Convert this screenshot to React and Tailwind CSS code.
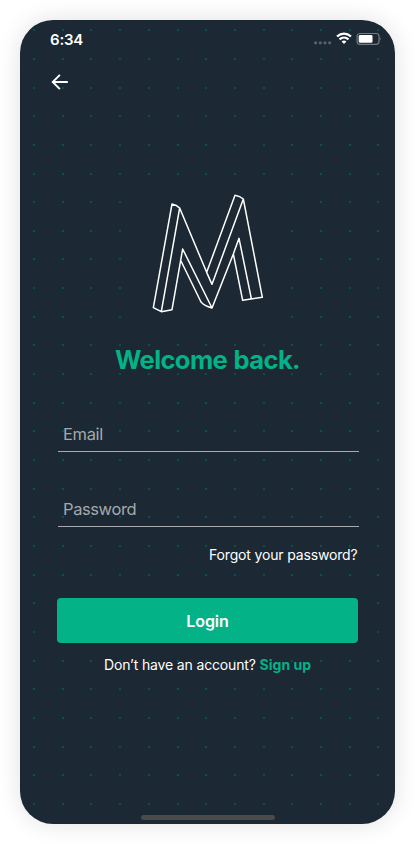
const columns = Array.from({ length: 13 }, (_, i) => Math.round(13 + i * 28.7));
const rows = Array.from({ length: 28 }, (_, i) => Math.round(9.2 + i * 28.66));

export default function App() {
  return (
    <main className="h-[844px] w-[415px] bg-white p-5 font-[Inter,sans-serif]">
      <section className="relative isolate flex h-[804px] w-[375px] flex-col overflow-clip rounded-[33px] bg-[#1c2833] text-white shadow-[0_0_24px_rgba(0,0,0,0.12)]">
        <svg className="absolute inset-0 -z-10" width="375" height="804" fill="#045347">
          {rows.map((y) => columns.map((x) => <rect key={`${x}-${y}`} x={x} y={y} width="2" height="2" />))}
        </svg>
        <header className="flex h-[38px] items-center justify-between pr-[14px] pl-[30px]">
          <span className="text-[15px] leading-none font-semibold tracking-[-0.2px]">6:34</span>
          <svg width="71" height="16" viewBox="0 0 71 16" fill="none">
            <g fill="#59626a">
              <circle cx="5.6" cy="11.8" r="1.6" /><circle cx="10.3" cy="11.8" r="1.6" /><circle cx="15" cy="11.8" r="1.6" /><circle cx="19.7" cy="11.8" r="1.6" />
            </g>
            <g stroke="#fff" strokeWidth="2.2">
              <path d="M27 5.5C31.2 1.6 36.8 1.6 41 5.5" /><path d="M29.5 8.4C32.2 5.9 35.8 5.9 38.5 8.4" />
            </g>
            <path d="M31.6 10.5Q34 8.6 36.4 10.5L34 12.9Z" fill="#fff" />
            <rect x="47.1" y="2.5" width="21.9" height="10.8" rx="2.8" stroke="#737a80" strokeWidth="1.2" />
            <rect x="48.7" y="4.1" width="13.8" height="7.7" rx="1.4" fill="#fff" />
            <path d="M69.8 6Q71.5 7.9 69.8 9.8Z" fill="#737a80" />
          </svg>
        </header>
        <button className="mt-4 ml-[31px] h-4 w-[17px]" aria-label="Back">
          <svg width="17" height="16" fill="none" stroke="#fff" strokeWidth="1.9">
            <path d="M16.8 8H2M8.9 .8 1.7 8l7.2 7.2" />
          </svg>
        </button>
        <svg className="mt-[95px] ml-[120px] shrink-0 bg-[#1c2833]" width="135" height="140" viewBox="0 0 405 420" fill="none" stroke="#fff" strokeWidth="4.5" strokeLinejoin="round">
          <path d="M96 57Q110 60 119 69L200 262 285 31Q300 34 310 42L367 337 308 346 280 207 216 369 128 192 96 374 64 380 40 368Z M119 69 64 380M200 262 216 298 310 42M280 207 297 160 334 341M123 228 183 351Q192 362 216 369" />
        </svg>
        <h1 className="mt-[18px] text-center text-[25.5px] leading-[34px] font-bold tracking-[-0.6px] text-[#03b287] [word-spacing:1px]">Welcome back.</h1>
        <form className="mr-[36px] ml-[38px] flex flex-col pt-[36px]">
          <label className="h-[39px] border-b border-[#a7abb0] pt-[9px] pl-[5px] text-[16.5px] leading-6 tracking-[-0.35px] text-[#a4a8ac]">Email</label>
          <label className="mt-9 h-[39px] border-b border-[#a7abb0] pt-[9px] pl-[5px] text-[16.5px] leading-6 tracking-[-0.4px] text-[#a4a8ac]">Password</label>
          <a className="mt-[18px] mr-[1.5px] self-end text-[14px] leading-5 tracking-[-0.16px]">Forgot your password?</a>
          <button className="mt-[33px] -ml-px h-[45px] w-[301px] rounded bg-[#03b287] text-[16px] font-semibold tracking-[-0.1px]">Login</button>
        </form>
        <p className="mt-3 text-center text-[14px] leading-5 tracking-[-0.15px]">Don’t have an account? <a className="font-bold tracking-normal text-[#03b287]">Sign up</a></p>
        <div className="mt-auto mb-1 h-[5px] w-[134px] self-center rounded-full bg-[#4b4949]" />
      </section>
    </main>
  );
}
